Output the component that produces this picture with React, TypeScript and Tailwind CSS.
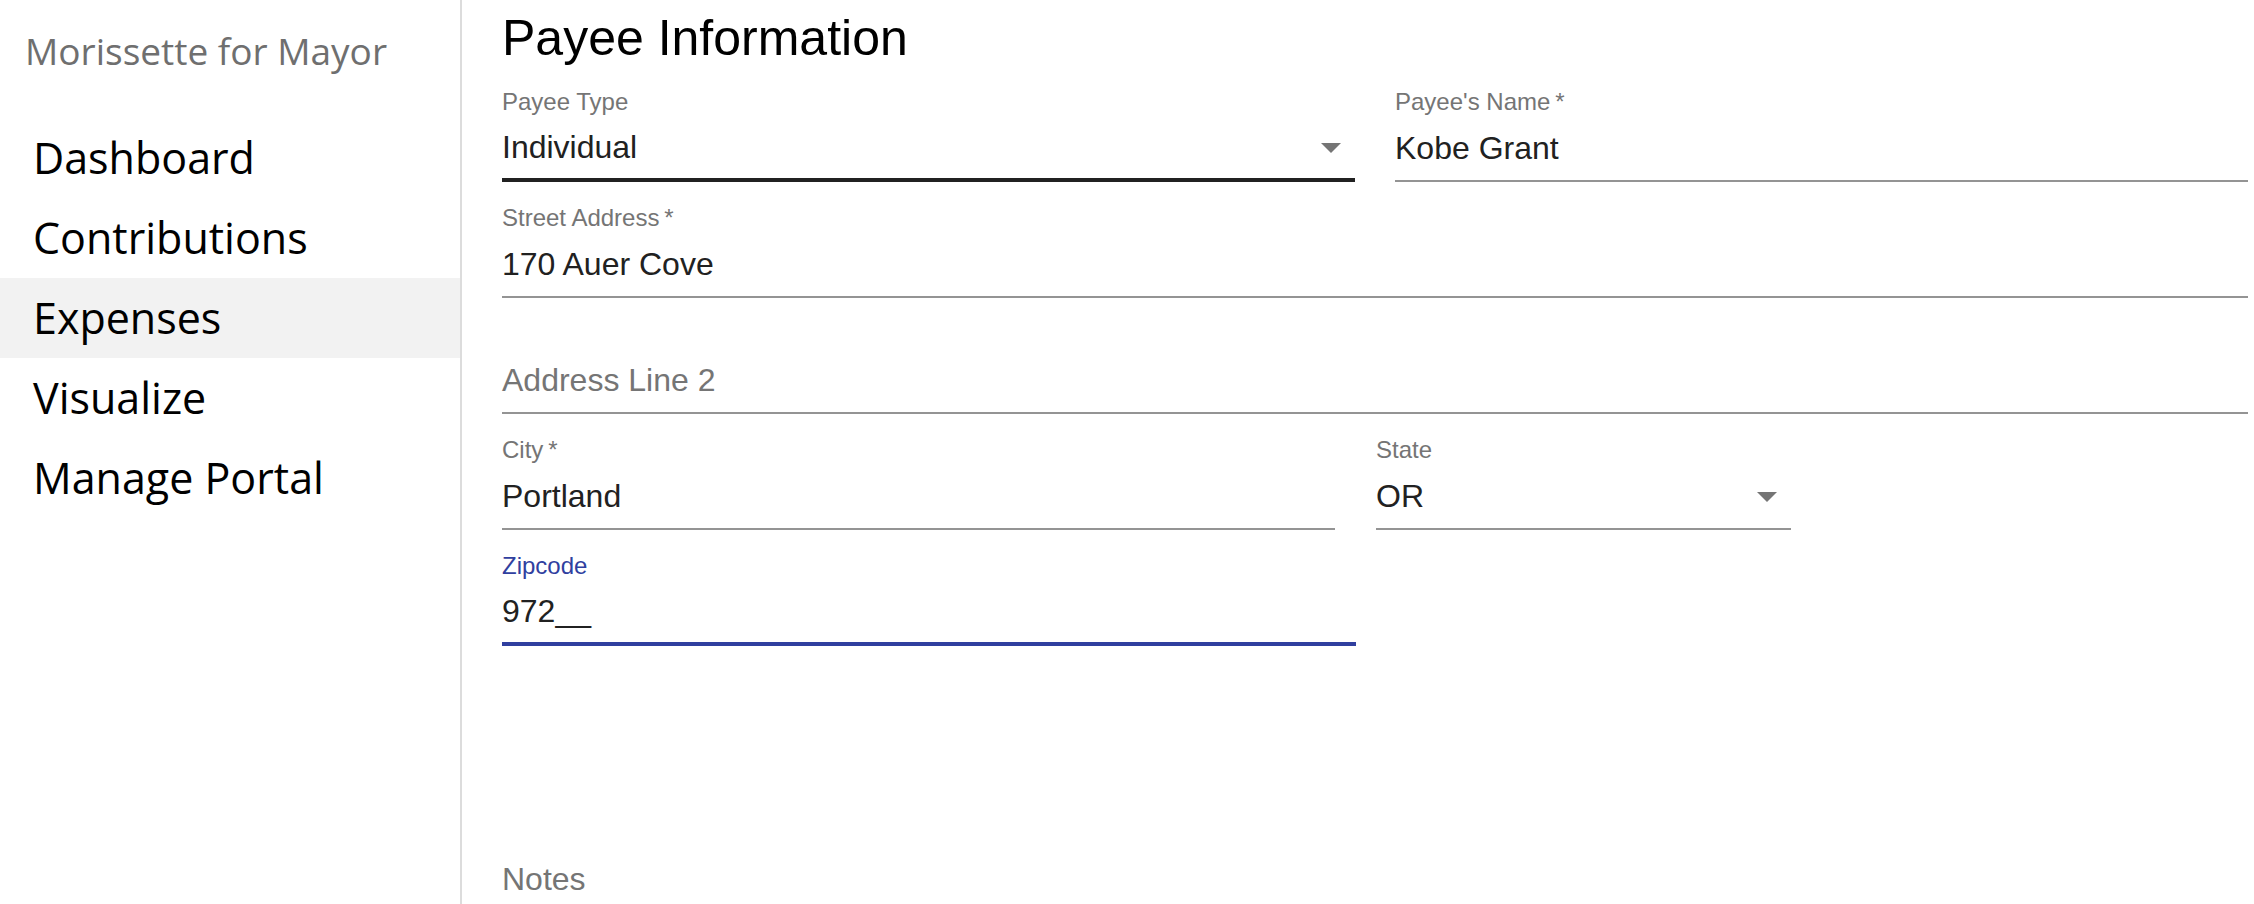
import React from "react"

const sans = { fontFamily: '"Liberation Sans", Arial, sans-serif' }

function Arrow() {
  return (
    <svg width="48" height="48" viewBox="0 0 24 24" className="shrink-0">
      <path d="M7 10l5 5 5-5z" fill="#757575" />
    </svg>
  )
}

type FieldProps = {
  label: string
  value?: string
  required?: boolean
  select?: boolean
  line?: "normal" | "hover" | "focus"
  width?: string
}

function Field({ label, value, required, select, line = "normal", width = "w-full" }: FieldProps) {
  const shrink = value !== undefined
  const border =
    line === "focus"
      ? "border-b-4 border-[#303f9f]"
      : line === "hover"
      ? "border-b-4 border-[#212121]"
      : "border-b-2 border-[#949494]"
  return (
    <div className={`${width} flex flex-col`}>
      <div
        className={`h-[28px] text-[24px] leading-[28px] ${
          line === "focus" ? "text-[#303f9f]" : "text-[#757575]"
        }`}
      >
        {shrink ? label : ""}
        {shrink && required ? "\u2009*" : ""}
      </div>
      <div className={`h-[66px] flex items-center justify-between ${border}`}>
        {shrink ? (
          <span className="text-[32px] text-[#212121]">{value}</span>
        ) : (
          <span className="text-[32px] text-[#757575]">{label}</span>
        )}
        {select && <Arrow />}
      </div>
    </div>
  )
}

export default function App() {
  const nav = ["Dashboard", "Contributions", "Expenses", "Visualize", "Manage Portal"]

  return (
    <div className="flex h-screen w-full overflow-hidden bg-white">
      {/* Sidebar */}
      <div
        className="w-[462px] shrink-0 border-r-2 border-[#dcdcdc]"
        style={{ fontFamily: '"Open Sans", "Noto Sans", sans-serif' }}
      >
        <div className="pt-[26px] pl-[25px] text-[37px] leading-[50px] text-[#6f6f6f]">
          Morissette for Mayor
        </div>
        <div className="mt-[42px] flex flex-col">
          {nav.map((item) => (
            <div
              key={item}
              className={`h-[80px] flex items-center pl-[33px] text-[43px] text-black ${
                item === "Expenses" ? "bg-[#f2f2f2]" : ""
              }`}
            >
              {item}
            </div>
          ))}
        </div>
      </div>

      {/* Main */}
      <div className="flex-1 pl-[40px] pr-[6px]" style={sans}>
        <h1 className="pt-[9px] text-[50px] leading-[58px] text-black">Payee Information</h1>

        <div className="mt-[21px] flex flex-col gap-[22px]">
          <div className="grid grid-cols-2 gap-x-[40px] items-start">
            <Field label="Payee Type" value="Individual" select line="hover" />
            <Field label="Payee's Name" value="Kobe Grant" required />
          </div>

          <Field label="Street Address" value="170 Auer Cove" required />
          <Field label="Address Line 2" />

          <div className="flex gap-x-[41px]">
            <Field label="City" value="Portland" required width="w-[833px]" />
            <Field label="State" value="OR" select width="w-[415px]" />
          </div>

          <Field label="Zipcode" value="972__" line="focus" width="w-[854px]" />
        </div>

        <div className="mt-[173px]">
          <Field label="Notes" />
        </div>
      </div>
    </div>
  )
}
